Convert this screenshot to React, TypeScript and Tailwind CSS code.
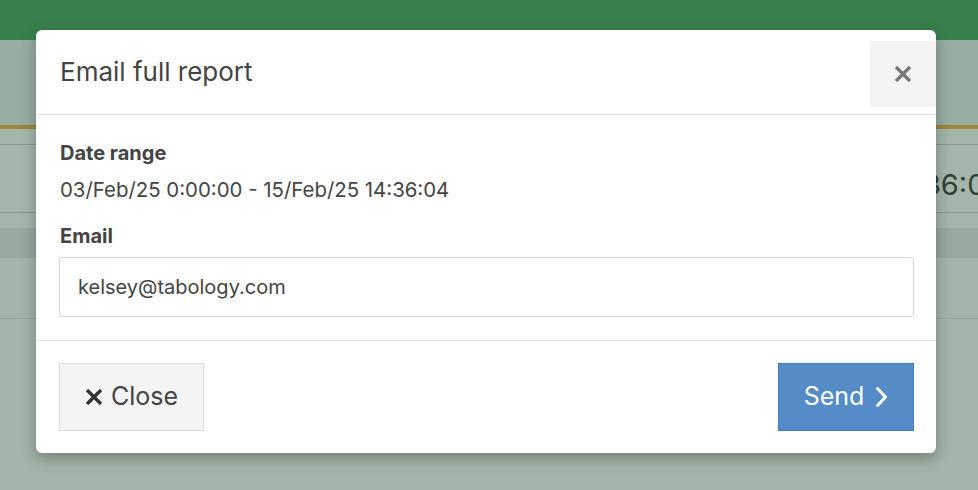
import React from "react";

export default function App() {
  return (
    <div className="relative w-[978px] h-[490px] overflow-hidden bg-[#a3b5a8]" style={{ fontFamily: "Inter, 'Noto Sans', sans-serif" }}>
      {/* background page (under overlay) */}
      <div className="flex flex-col w-full">
        <div className="h-[40px] bg-[#38804d]" />
        <div className="h-[85px] bg-[#98ada2]" />
        <div className="h-[4px] bg-[#a08838]" />
        <div className="h-[15px] bg-[#a4b6a9]" />
        <div className="h-[1px] bg-[#8a9a90]" />
        <div className="h-[67px] bg-[#a4b6a9] flex items-center whitespace-nowrap overflow-hidden">
          <span className="ml-[884px] mt-[12px] text-[29px] text-[#2e4236]">14:36:04</span>
        </div>
        <div className="h-[1px] bg-[#8a9a90]" />
        <div className="h-[15px] bg-[#a4b6a9]" />
        <div className="h-[30px] bg-[#97aa9f]" />
        <div className="h-[60px] bg-[#a3b5a8]" />
        <div className="h-[1px] bg-[#95a69b]" />
      </div>

      {/* modal */}
      <div className="absolute left-[36px] top-[30px] w-[900px] h-[423px] bg-white rounded-[6px] shadow-[0_5px_15px_rgba(0,0,0,0.3)] flex flex-col">
        <div className="relative h-[85px] border-b border-[#e5e5e5] flex items-center pl-[24px] shrink-0">
          <h2 className="text-[26px] text-[#444] font-normal leading-none">Email full report</h2>
          <button className="absolute right-0 top-[11px] w-[66px] h-[66px] bg-[#f4f4f4] flex items-center justify-center">
            <svg width="18" height="18" viewBox="0 0 18 18">
              <path d="M2 2 L16 16 M16 2 L2 16" stroke="#777" strokeWidth="3.2" strokeLinecap="butt" />
            </svg>
          </button>
        </div>
        <div className="pl-[23px] pr-[22px] pt-[26px] pb-[23px] border-b border-[#e5e5e5] flex flex-col">
          <div className="pl-[1px] text-[20px] leading-[24px] font-bold text-[#444]">Date range</div>
          <div className="pl-[1px] mt-[13px] text-[20.4px] leading-[24px] text-[#444]">03/Feb/25 0:00:00 - 15/Feb/25 14:36:04</div>
          <div className="pl-[1px] mt-[22px] text-[20px] leading-[24px] font-bold text-[#444]">Email</div>
          <div className="mt-[9px] h-[60px] border border-[#d6d6dd] rounded-[3px] flex items-center pl-[18px] text-[20px] text-[#444]">
            kelsey@tabology.com
          </div>
        </div>
        <div className="flex-1 flex items-center justify-between pl-[23px] pr-[22px]">
          <button className="w-[145px] h-[68px] bg-[#f4f4f4] border border-[#dcdcdc] flex items-center justify-center gap-[8px] text-[25px] text-[#444]">
            <svg width="18" height="16" viewBox="0 0 18 16">
              <path d="M2 1 L16 15 M16 1 L2 15" stroke="#333" strokeWidth="3.4" />
            </svg>
            <span>Close</span>
          </button>
          <button className="w-[136px] h-[68px] bg-[#558bc7] border border-[#4a7db8] flex items-center justify-center gap-[11px] text-[25px] text-white">
            <span>Send</span>
            <svg width="13" height="20" viewBox="0 0 13 20">
              <path d="M2.5 1.5 L10.5 10 L2.5 18.5" stroke="white" strokeWidth="3" fill="none" strokeLinecap="round" strokeLinejoin="round" />
            </svg>
          </button>
        </div>
      </div>
    </div>
  );
}
